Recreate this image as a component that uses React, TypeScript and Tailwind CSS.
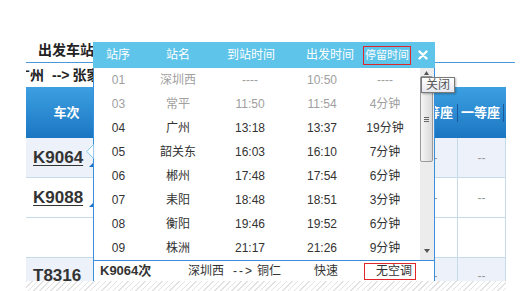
const stops = [
  { no: "01", name: "深圳西", arr: "----", dep: "10:50", stay: "----", past: true },
  { no: "03", name: "常平", arr: "11:50", dep: "11:54", stay: "4分钟", past: true },
  { no: "04", name: "广州", arr: "13:18", dep: "13:37", stay: "19分钟", past: false },
  { no: "05", name: "韶关东", arr: "16:03", dep: "16:10", stay: "7分钟", past: false },
  { no: "06", name: "郴州", arr: "17:48", dep: "17:54", stay: "6分钟", past: false },
  { no: "07", name: "耒阳", arr: "18:48", dep: "18:51", stay: "3分钟", past: false },
  { no: "08", name: "衡阳", arr: "19:46", dep: "19:52", stay: "6分钟", past: false },
  { no: "09", name: "株洲", arr: "21:17", dep: "21:26", stay: "9分钟", past: false },
]

const trains = [
  { code: "K9064", bg: "bg-[#edf1f9]", mark: true, seat: true },
  { code: "K9088", bg: "bg-white", mark: true, seat: true },
  { code: "", bg: "bg-white", mark: false, seat: false },
]

const Corner = () => (
  <svg className="absolute left-[63px] top-[24px]" width="5" height="5" viewBox="0 0 5 5">
    <polygon points="5,0 5,5 0,5" fill="#1e6fc7" />
  </svg>
)

const TrainRow: React.FC<{ code: string; bg: string; mark: boolean; seat: boolean }> = ({ code, bg, mark, seat }) => (
  <div className={`relative flex h-[40px] border-b border-[#c6dbea] ${bg}`}>
    <div className="w-[81px] flex items-center pl-[7px] text-[17px] font-bold text-[#333]">
      {code && <span className="underline underline-offset-2">{code}</span>}
    </div>
    {mark && <Corner />}
    <div className="w-[303px]" />
    <div className="w-[47px] flex items-center justify-center text-[12px] text-[#999]">{seat ? "--" : ""}</div>
    <div className="w-[48px] border-l border-[#c6dbea] flex items-center justify-center text-[12px] text-[#999]">{seat ? "--" : ""}</div>
    <div className="w-px bg-[#c6dbea]" />
  </div>
)

const App: React.FC = () => {
  return (
    <div className="relative w-[532px] h-[291px] overflow-hidden bg-white text-[#333] font-[family-name:'Liberation_Sans','Noto_Sans_CJK_SC',sans-serif]">
      {/* page underneath */}
      <div className="h-[62px] pt-[42px] pl-[38px] text-[14px] leading-[17px] font-bold text-[#222]">出发车站：</div>
      <div className="ml-[26px] w-[489px] h-px bg-[#4a97d9]" />
      <div className="ml-[26px] h-[24px] overflow-hidden flex items-center text-[14px] font-bold text-[#222] whitespace-nowrap">
        <span className="-ml-[10px]">广州</span>
        <span className="ml-[8px]">--&gt;</span>
        <span className="ml-[3px]">张家界</span>
      </div>

      <div className="ml-[26px] w-[480px]">
        <div className="h-[51px] flex items-center bg-[linear-gradient(#3da0e1,#1b76c2)] text-white text-[13px] font-bold">
          <div className="w-[81px] text-center">车次</div>
          <div className="w-[303px]" />
          <div className="w-[47px] text-center">二等座</div>
          <div className="w-px h-[18px] bg-[#1a5a9c]" />
          <div className="w-[45px] text-center">一等座</div>
          <div className="w-px h-[18px] bg-[#1a5a9c]" />
        </div>
        {trains.map((t, i) => (
          <TrainRow key={i} {...t} />
        ))}
        <div className="h-[23px] overflow-hidden bg-[#edf1f9]">
          <div className="flex h-[36px]">
            <div className="w-[81px] flex items-center pl-[7px] text-[17px] font-bold text-[#333]">T8316</div>
            <div className="w-[303px]" />
            <div className="w-[47px] flex items-center justify-center text-[12px] text-[#999]">--</div>
            <div className="w-[48px] border-l border-[#c6dbea] flex items-center justify-center text-[12px] text-[#999]">--</div>
            <div className="w-px bg-[#c6dbea]" />
          </div>
        </div>
        <div className="h-[10px] bg-[repeating-linear-gradient(135deg,#e2e2e2_0px,#e2e2e2_1px,#ffffff_1px,#ffffff_4px)]" />
      </div>

      {/* stop list popup */}
      <div className="absolute left-[93px] top-[42px] w-[342px] h-[239px] flex flex-col bg-white">
        <div className="h-[26px] shrink-0 flex items-center bg-[#5ec4e9] text-white text-[12px] whitespace-nowrap">
          <div className="w-[50px] text-center">站序</div>
          <div className="w-[70px] text-center">站名</div>
          <div className="w-[76px] text-center">到站时间</div>
          <div className="w-[74px] pl-[8px] text-center">出发时间</div>
          <div className="w-[48px] h-[19px] flex items-center justify-center border border-[#e0262b] text-[11px]">停留时间</div>
          <div className="w-[24px] flex justify-center">
            <svg width="10" height="10" viewBox="0 0 10 10">
              <path d="M1.5 1.5 L8.5 8.5 M8.5 1.5 L1.5 8.5" stroke="#fff" strokeWidth="2.4" strokeLinecap="round" />
            </svg>
          </div>
        </div>

        <div className="h-[192px] shrink-0 flex border-x border-[#3a8edb]">
          <div className="w-[326px] text-[12px]">
            {stops.map((s) => (
              <div key={s.no} className={`h-[24px] flex items-center ${s.past ? "text-[#a0a0a0]" : "text-[#333]"}`}>
                <div className="w-[49px] text-center">{s.no}</div>
                <div className="w-[70px] text-center">{s.name}</div>
                <div className="w-[74px] text-center">{s.arr}</div>
                <div className="w-[70px] text-center">{s.dep}</div>
                <div className="w-[56px] text-center">{s.stay}</div>
              </div>
            ))}
          </div>
          <div className="relative w-[14px] bg-[#ececec]">
            <svg className="absolute left-[4px] top-[3px]" width="5" height="4" viewBox="0 0 5 4">
              <polygon points="2.5,0 5,4 0,4" fill="#555" />
            </svg>
            <div className="absolute left-0 top-[8px] w-[13px] h-[86px] rounded-[2px] border border-[#9a9a9a] bg-[linear-gradient(90deg,#f6f6f6,#d9d9d9)] flex flex-col items-center justify-center gap-[1px]">
              <div className="w-[5px] h-px bg-[#666]" />
              <div className="w-[5px] h-px bg-[#666]" />
              <div className="w-[5px] h-px bg-[#666]" />
            </div>
            <svg className="absolute left-[4px] top-[181px]" width="6" height="4" viewBox="0 0 6 4">
              <polygon points="0,0 6,0 3,4" fill="#555" />
            </svg>
          </div>
        </div>

        <div className="h-[21px] shrink-0 flex items-center border-x border-t border-[#3a8edb] pl-[6px] text-[12px] text-[#333] whitespace-nowrap">
          <span className="w-[88px] text-[13px] font-bold">K9064次</span>
          <span className="w-[45px]">深圳西</span>
          <span className="w-[24px] tracking-[2px]">--&gt;</span>
          <span className="w-[57px]">铜仁</span>
          <span className="w-[50px]">快速</span>
          <span className="w-[52px] h-[17px] flex items-center pl-[11px] border border-[#e0262b]">无空调</span>
        </div>
      </div>

      {/* pointer toward the selected train */}
      <svg className="absolute left-[86px] top-[144px]" width="8" height="15" viewBox="0 0 8 15">
        <polygon points="7.5,0.5 0.8,7.5 7.5,14.5" fill="#fff" />
        <path d="M7.5 0.5 L0.8 7.5 L7.5 14.5" fill="none" stroke="#7fc9ec" strokeWidth="1" />
      </svg>

      {/* tooltip for the close button */}
      <div className="absolute left-[421px] top-[77px] w-[34px] h-[16px] flex items-center justify-center border border-[#7a7a7a] bg-[linear-gradient(#ffffff,#e6e7ef)] shadow-[1px_1px_2px_rgba(0,0,0,0.3)] text-[12px] leading-none text-[#555]">
        关闭
      </div>
    </div>
  )
}

export default App
